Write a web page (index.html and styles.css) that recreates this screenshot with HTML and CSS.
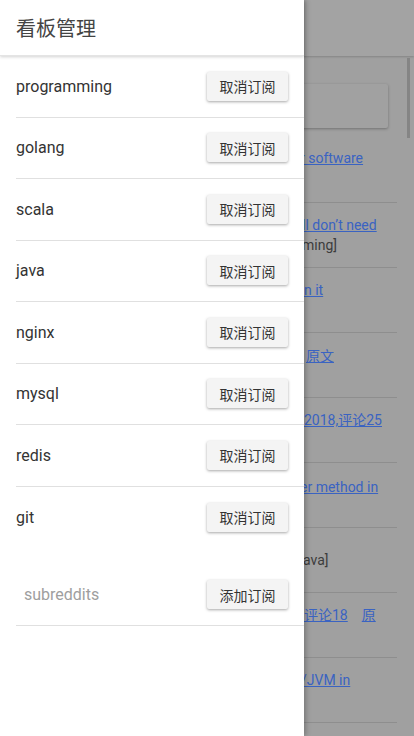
FILE: index.html
```html
<!DOCTYPE html>
<html>
<head>
<meta charset="utf-8">
<link rel="stylesheet" href="styles.css">
</head>
<body>
<div class="page">
  <div class="appbar"></div>
  <div class="content">
    <div class="card"></div>
    <div class="bg-item first p300"><a class="lnk">r software</a></div>
    <div class="bg-item p302"><a class="lnk">ll don’t need</a><div class="tag">ming]</div></div>
    <div class="bg-item p304"><a class="lnk">n it</a></div>
    <div class="bg-item p306 t13"><a class="lnk">原文</a></div>
    <div class="bg-item p304"><a class="lnk">2018,评论25</a></div>
    <div class="bg-item p300 t14"><a class="lnk">er method in</a></div>
    <div class="bg-item p303 t22"><div class="tag">ava]</div></div>
    <div class="bg-item p304"><a class="lnk">评论18</a><a class="lnk gap">原</a></div>
    <div class="bg-item p301"><a class="lnk">/JVM in</a></div>
    <div class="bg-item"></div>
  </div>
  <div class="scrollbar"></div>
</div>

<aside class="drawer">
  <header class="drawer-head">看板管理</header>
  <ul class="subs">
    <li class="sub"><span class="name">programming</span><button class="btn">取消订阅</button></li>
    <li class="sub"><span class="name">golang</span><button class="btn">取消订阅</button></li>
    <li class="sub"><span class="name">scala</span><button class="btn">取消订阅</button></li>
    <li class="sub"><span class="name">java</span><button class="btn">取消订阅</button></li>
    <li class="sub"><span class="name">nginx</span><button class="btn">取消订阅</button></li>
    <li class="sub"><span class="name">mysql</span><button class="btn">取消订阅</button></li>
    <li class="sub"><span class="name">redis</span><button class="btn">取消订阅</button></li>
    <li class="sub last"><span class="name">git</span><button class="btn">取消订阅</button></li>
  </ul>
  <div class="add-row">
    <input class="add-input" type="text" placeholder="subreddits">
    <button class="btn">添加订阅</button>
  </div>
</aside>
</body>
</html>
```

FILE: styles.css
```css
* { box-sizing: border-box; }
html, body {
  margin: 0;
  padding: 0;
  width: 414px;
  height: 736px;
  overflow: hidden;
  font-family: Roboto, "Noto Sans CJK SC", sans-serif;
  background: #a0a0a0;
}

/* underlying page (dimmed) */
.page {
  width: 414px;
  height: 736px;
  overflow: hidden;
  background: #a0a0a0;
  position: relative;
}
.appbar {
  height: 56px;
  background: #a3a3a3;
  box-shadow: 0 1px 2px rgba(0,0,0,0.18);
}
.content {
  padding: 28px 16px 0 0;
}
.card {
  margin-left: 200px;
  margin-right: 10px;
  height: 44px;
  background: #a1a1a1;
  box-shadow: 0 1px 3px rgba(0,0,0,0.3);
  border-radius: 2px;
}
.bg-item {
  height: 65px;
  border-bottom: 1px solid #8e8e8e;
  padding-top: 12px;
  font-size: 14px;
  line-height: 20px;
  white-space: nowrap;
  overflow: hidden;
  margin-right: 1px;
}
.bg-item.first {
  height: 75px;
  padding-top: 20px;
}
.p300 { padding-left: 300px; }
.p301 { padding-left: 301px; }
.p302 { padding-left: 302px; }
.p303 { padding-left: 303px; }
.p304 { padding-left: 304px; }
.p306 { padding-left: 306px; }
.t13 { padding-top: 13px; }
.t14 { padding-top: 14px; }
.t22 { padding-top: 22px; }
.lnk {
  color: #3a63c2;
  text-decoration: underline;
}
.gap {
  margin-left: 14px;
}
.tag {
  color: #3c3c3c;
}
.scrollbar {
  position: absolute;
  right: 4px;
  top: 58px;
  width: 3px;
  height: 80px;
  background: #858585;
}

/* drawer */
.drawer {
  position: absolute;
  left: 0;
  top: 0;
  width: 304px;
  height: 736px;
  background: #fff;
  box-shadow: 2px 0 5px rgba(0,0,0,0.25);
  display: flex;
  flex-direction: column;
}
.drawer-head {
  height: 56px;
  padding-left: 16px;
  display: flex;
  align-items: center;
  font-size: 20px;
  color: #444;
  box-shadow: 0 1px 3px rgba(0,0,0,0.18);
  border-bottom: 1px solid #e4e4e4;
  position: relative;
  z-index: 1;
}
.subs {
  list-style: none;
  margin: 0;
  padding: 0;
}
.sub {
  height: 61.5px;
  margin-left: 16px;
  padding-right: 16px;
  border-bottom: 1px solid #e0e0e0;
  display: flex;
  align-items: center;
  justify-content: space-between;
}
.sub.last {
  border-bottom: none;
}
.name {
  font-size: 16px;
  color: #333;
}
.btn {
  width: 81px;
  height: 29px;
  border: none;
  border-radius: 2px;
  background: #f4f4f4;
  box-shadow: 0 1px 3px rgba(0,0,0,0.35);
  font-family: "Noto Sans CJK SC", sans-serif;
  font-size: 14px;
  color: #333;
  padding: 0;
}
.add-row {
  margin-top: 16px;
  margin-left: 16px;
  height: 62px;
  padding-right: 16px;
  border-bottom: 1px solid #e0e0e0;
  display: flex;
  align-items: center;
  justify-content: space-between;
}
.add-input {
  border: none;
  outline: none;
  padding: 0 0 0 8px;
  font-family: Roboto, sans-serif;
  font-size: 16px;
  color: #333;
  width: 160px;
  background: transparent;
}
.add-input::placeholder {
  color: #9e9e9e;
}
```
